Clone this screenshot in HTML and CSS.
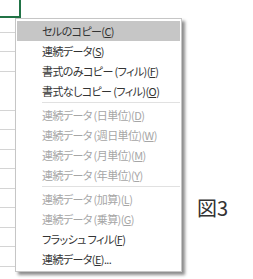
FILE: index.html
```html
<!DOCTYPE html>
<html lang="ja">
<head>
    <meta charset="UTF-8">
    <title>オートフィル オプション</title>
    <link rel="stylesheet" href="styles.css">
</head>
<body>
    <div class="sheet">
        <div class="cell"></div>
        <div class="row">
            <ul class="menu">
                <li class="item active">セルのコピー(<u>C</u>)</li>
                <li class="item">連続データ(<u>S</u>)</li>
                <li class="item">書式のみコピー (フィル)(<u>F</u>)</li>
                <li class="item">書式なしコピー (フィル)(<u>O</u>)</li>
                <li class="sep"></li>
                <li class="item off">連続データ (日単位)(<u>D</u>)</li>
                <li class="item off">連続データ (週日単位)(<u>W</u>)</li>
                <li class="item off">連続データ (月単位)(<u>M</u>)</li>
                <li class="item off">連続データ (年単位)(<u>Y</u>)</li>
                <li class="sep"></li>
                <li class="item off">連続データ (加算)(<u>L</u>)</li>
                <li class="item off">連続データ (乗算)(<u>G</u>)</li>
                <li class="item">フラッシュ フィル(<u>F</u>)</li>
                <li class="item">連続データ(<u>E</u>)...</li>
            </ul>
            <div class="caption">図3</div>
        </div>
    </div>
</body>
</html>
```

FILE: styles.css
```css
body {
    margin: 0;
    background-color: #fff;
    font-family: "Noto Sans CJK JP", "Noto Sans", sans-serif;
}
.sheet {
    width: 253px;
    height: 279px;
    overflow: hidden;
    background-image: repeating-linear-gradient(to bottom, transparent 0, transparent 14px, #d4d4d4 14px, #d4d4d4 15px, transparent 15px, transparent 19.5px);
    background-size: 15px 100%;
    background-position: 0 18px;
    background-repeat: no-repeat;
}
.cell {
    width: 19px;
    height: 16px;
    border-right: 2px solid #217346;
    border-bottom: 2px solid #217346;
    background-color: #fff;
}
.row {
    display: flex;
    margin-left: 15px;
}
.menu {
    list-style: none;
    margin: 0;
    padding: 2px 1px 2px 1px;
    width: 163px;
    background-color: #fff;
    border: 1px solid #c6c6c6;
    box-shadow: 3px 3px 3px rgba(0, 0, 0, 0.45);
    font-size: 11px;
    letter-spacing: -0.6px;
    font-feature-settings: "palt";
}
.item {
    height: 20px;
    line-height: 20px;
    padding-left: 25px;
    color: #333;
    white-space: nowrap;
}
.item.active {
    background-color: #c6c6c6;
}
.item.off {
    color: #a6a6a6;
}
.sep {
    height: 4px;
    margin-left: 25px;
    background: linear-gradient(#fff 1px, #e1e1e1 1px, #e1e1e1 2px, #fff 2px);
}
.caption {
    margin: 176px 0 0 15px;
    font-size: 20px;
    color: #333;
    line-height: 28px;
}
```
